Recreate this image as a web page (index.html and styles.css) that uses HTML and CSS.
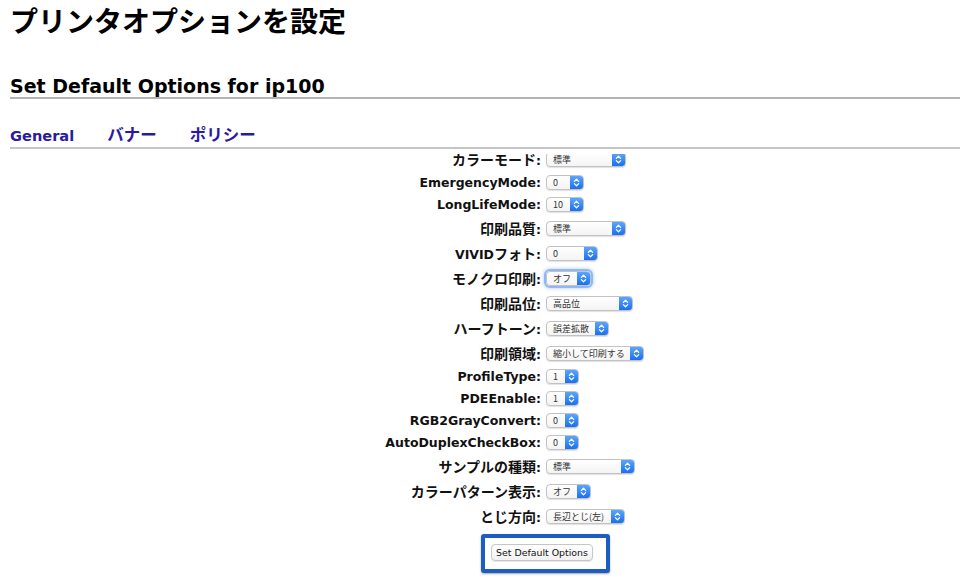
FILE: index.html
```html
<!DOCTYPE html>
<html lang="ja">
<head>
<meta charset="utf-8">
<title>プリンタオプションを設定</title>
<link rel="stylesheet" href="styles.css">
</head>
<body>
<h1 class="title">プリンタオプションを設定</h1>
<h2 class="subtitle">Set Default Options for ip100</h2>
<nav class="tabs">
  <a class="tab">General</a>
  <a class="tab ja">バナー</a>
  <a class="tab ja">ポリシー</a>
</nav>
<div class="panel">
  <div class="form">
    <span class="label"><span class="ja">カラーモード</span>:</span>
    <span class="select w80"><span class="val">標準</span><span class="step"><svg viewBox="0 0 13 15"><path d="M4 6.2 6.5 3.7 9 6.2M4 8.8 6.5 11.3 9 8.8"/></svg></span></span>

    <span class="label">EmergencyMode:</span>
    <span class="select w38"><span class="val">0</span><span class="step"><svg viewBox="0 0 13 15"><path d="M4 6.2 6.5 3.7 9 6.2M4 8.8 6.5 11.3 9 8.8"/></svg></span></span>

    <span class="label">LongLifeMode:</span>
    <span class="select w38"><span class="val">10</span><span class="step"><svg viewBox="0 0 13 15"><path d="M4 6.2 6.5 3.7 9 6.2M4 8.8 6.5 11.3 9 8.8"/></svg></span></span>

    <span class="label"><span class="ja">印刷品質</span>:</span>
    <span class="select w80"><span class="val">標準</span><span class="step"><svg viewBox="0 0 13 15"><path d="M4 6.2 6.5 3.7 9 6.2M4 8.8 6.5 11.3 9 8.8"/></svg></span></span>

    <span class="label">VIVID<span class="ja">フォト</span>:</span>
    <span class="select w52"><span class="val">0</span><span class="step"><svg viewBox="0 0 13 15"><path d="M4 6.2 6.5 3.7 9 6.2M4 8.8 6.5 11.3 9 8.8"/></svg></span></span>

    <span class="label"><span class="ja">モノクロ印刷</span>:</span>
    <span class="select w45 focus"><span class="val">オフ</span><span class="step"><svg viewBox="0 0 13 15"><path d="M4 6.2 6.5 3.7 9 6.2M4 8.8 6.5 11.3 9 8.8"/></svg></span></span>

    <span class="label"><span class="ja">印刷品位</span>:</span>
    <span class="select w87"><span class="val">高品位</span><span class="step"><svg viewBox="0 0 13 15"><path d="M4 6.2 6.5 3.7 9 6.2M4 8.8 6.5 11.3 9 8.8"/></svg></span></span>

    <span class="label"><span class="ja">ハーフトーン</span>:</span>
    <span class="select w63"><span class="val">誤差拡散</span><span class="step"><svg viewBox="0 0 13 15"><path d="M4 6.2 6.5 3.7 9 6.2M4 8.8 6.5 11.3 9 8.8"/></svg></span></span>

    <span class="label"><span class="ja">印刷領域</span>:</span>
    <span class="select w98"><span class="val">縮小して印刷する</span><span class="step"><svg viewBox="0 0 13 15"><path d="M4 6.2 6.5 3.7 9 6.2M4 8.8 6.5 11.3 9 8.8"/></svg></span></span>

    <span class="label">ProfileType:</span>
    <span class="select w33"><span class="val">1</span><span class="step"><svg viewBox="0 0 13 15"><path d="M4 6.2 6.5 3.7 9 6.2M4 8.8 6.5 11.3 9 8.8"/></svg></span></span>

    <span class="label">PDEEnable:</span>
    <span class="select w33"><span class="val">1</span><span class="step"><svg viewBox="0 0 13 15"><path d="M4 6.2 6.5 3.7 9 6.2M4 8.8 6.5 11.3 9 8.8"/></svg></span></span>

    <span class="label">RGB2GrayConvert:</span>
    <span class="select w33"><span class="val">0</span><span class="step"><svg viewBox="0 0 13 15"><path d="M4 6.2 6.5 3.7 9 6.2M4 8.8 6.5 11.3 9 8.8"/></svg></span></span>

    <span class="label">AutoDuplexCheckBox:</span>
    <span class="select w33"><span class="val">0</span><span class="step"><svg viewBox="0 0 13 15"><path d="M4 6.2 6.5 3.7 9 6.2M4 8.8 6.5 11.3 9 8.8"/></svg></span></span>

    <span class="label"><span class="ja">サンプルの種類</span>:</span>
    <span class="select w89"><span class="val">標準</span><span class="step"><svg viewBox="0 0 13 15"><path d="M4 6.2 6.5 3.7 9 6.2M4 8.8 6.5 11.3 9 8.8"/></svg></span></span>

    <span class="label"><span class="ja">カラーパターン表示</span>:</span>
    <span class="select w45"><span class="val">オフ</span><span class="step"><svg viewBox="0 0 13 15"><path d="M4 6.2 6.5 3.7 9 6.2M4 8.8 6.5 11.3 9 8.8"/></svg></span></span>

    <span class="label"><span class="ja">とじ方向</span>:</span>
    <span class="select w79"><span class="val">長辺とじ(左)</span><span class="step"><svg viewBox="0 0 13 15"><path d="M4 6.2 6.5 3.7 9 6.2M4 8.8 6.5 11.3 9 8.8"/></svg></span></span>

    <div class="actions">
      <div class="highlight"><button class="button" type="button">Set Default Options</button></div>
    </div>
  </div>
</div>
</body>
</html>
```

FILE: styles.css
```css
html, body {
  margin: 0;
  padding: 0;
  background: #ffffff;
  height: 100%;
  overflow: hidden;
}
body {
  padding: 0 0 0 10px;
  box-sizing: border-box;
  display: flex;
  flex-direction: column;
  font-family: "DejaVu Sans", "Noto Sans CJK JP", sans-serif;
  color: #111;
}
.ja {
  font-family: "Noto Sans CJK JP", "DejaVu Sans", sans-serif;
}
.title {
  margin: 0;
  font-family: "Noto Sans CJK JP", sans-serif;
  font-size: 28px;
  line-height: 40px;
  font-weight: bold;
  color: #000;
}
.subtitle {
  margin: 35px 0 0 0;
  font-size: 19px;
  line-height: 22px;
  font-weight: bold;
  color: #000;
  border-bottom: 2px solid #b3b3b3;
}
.tabs {
  margin-top: 23px;
  display: flex;
  align-items: baseline;
  gap: 33px;
  border-bottom: 2px solid #c6c6c6;
  padding-bottom: 1px;
}
.tab {
  font-size: 14.6px;
  font-weight: bold;
  color: #2a1aa0;
  text-decoration: none;
}
.tab.ja {
  font-size: 16.5px;
}
.panel {
  flex: 1;
  margin-top: 5px;
  overflow: hidden;
}
.form {
  margin-top: -5px;
  display: grid;
  grid-template-columns: 531px auto;
  column-gap: 5px;
  row-gap: 5px;
  align-items: center;
  justify-content: start;
}
.label {
  text-align: right;
  font-size: 12.5px;
  font-weight: bold;
  color: #111;
  white-space: nowrap;
}
.label .ja {
  font-size: 14px;
}
.select {
  justify-self: start;
  box-sizing: border-box;
  height: 15px;
  margin: 1px 0;
  display: flex;
  align-items: stretch;
  border: 1px solid #c2c2c2;
  border-radius: 4px;
  background: linear-gradient(#ffffff, #f4f4f4);
  box-shadow: 0 1px 1px rgba(0, 0, 0, 0.12);
  overflow: hidden;
}
.select.focus {
  box-shadow: 0 0 0 2px rgba(120, 170, 245, 0.75), 0 0 3px 3px rgba(150, 190, 250, 0.5);
}
.val {
  flex: 1;
  padding-left: 6px;
  font-family: "Noto Sans CJK JP", "DejaVu Sans", sans-serif;
  font-size: 9px;
  line-height: 13px;
  color: #333;
  white-space: nowrap;
  overflow: hidden;
}
.step {
  width: 13px;
  flex: none;
  background: linear-gradient(#5aa6fb, #1c6ff0);
  display: flex;
}
.step svg {
  width: 13px;
  height: 13px;
}
.step path {
  fill: none;
  stroke: #ffffff;
  stroke-width: 1.4;
  stroke-linecap: round;
  stroke-linejoin: round;
}
.w33 { width: 33px; }
.w38 { width: 38px; }
.w45 { width: 45px; }
.w52 { width: 52px; }
.w63 { width: 63px; }
.w79 { width: 79px; }
.w80 { width: 80px; }
.w87 { width: 87px; }
.w89 { width: 89px; }
.w98 { width: 98px; }
.actions {
  grid-column: 1 / -1;
  padding-top: 3px;
  padding-left: 471px;
}
.highlight {
  box-sizing: border-box;
  width: 129px;
  height: 39px;
  border: 4px solid #1d5cc0;
  border-radius: 3px;
  box-shadow: 0 1px 2px rgba(0, 0, 0, 0.35);
  background: #ffffff;
  display: flex;
  align-items: center;
  padding: 0 0 2px 6px;
}
.button {
  box-sizing: border-box;
  height: 17px;
  width: 102px;
  padding: 0;
  border: 1px solid #c6c6c6;
  border-radius: 4px;
  background: linear-gradient(#ffffff, #f1f1f1);
  box-shadow: 0 1px 1px rgba(0, 0, 0, 0.1);
  font-family: "DejaVu Sans", sans-serif;
  font-size: 9.4px;
  color: #111;
  line-height: 15px;
}
```
